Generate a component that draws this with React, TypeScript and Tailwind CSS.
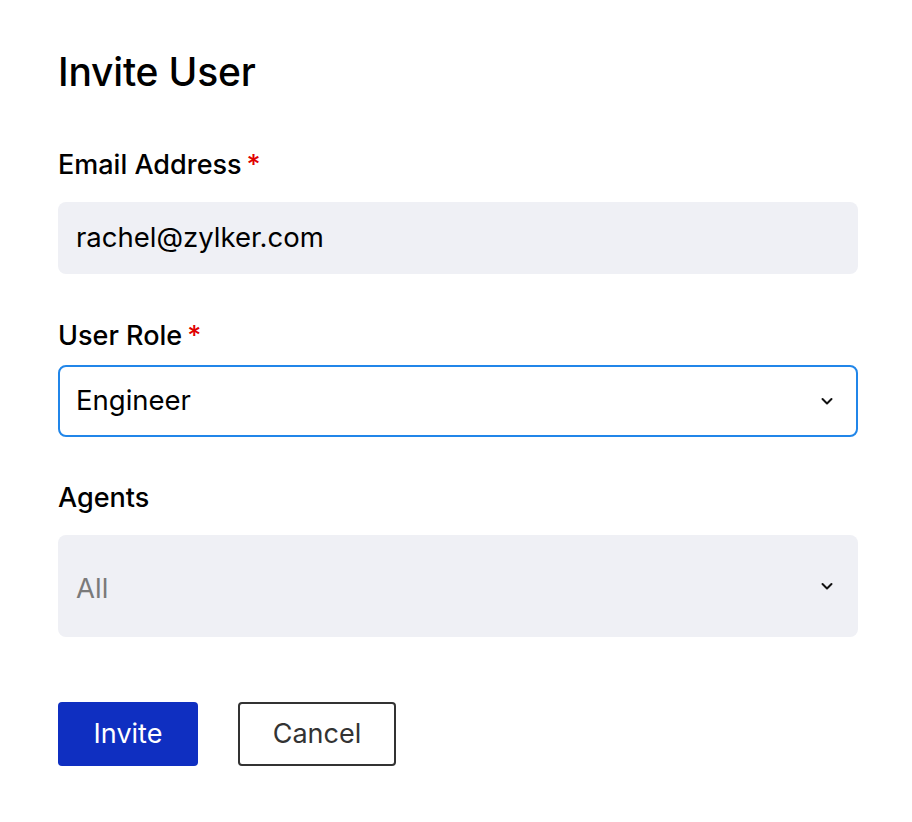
import React from "react";

function Chevron() {
  return (
    <svg width="14" height="14" viewBox="0 0 14 14" fill="none">
      <path d="M2.5 5 L7 9.5 L11.5 5" stroke="#111" strokeWidth="2" strokeLinecap="round" strokeLinejoin="round" />
    </svg>
  );
}

export default function App() {
  return (
    <div className="min-h-[822px] w-[912px] bg-white text-black" style={{ fontFamily: "Inter, 'Noto Sans', sans-serif" }}>
      <div className="w-[800px] ml-[58px] pt-[50px]">
        <h1 className="text-[39px] leading-[44px] font-medium tracking-[-0.2px]">Invite User</h1>

        <div className="mt-[55px] flex items-center text-[27px] leading-[32px] font-medium">
          Email Address<span className="ml-[5px] text-[#e00000]">*</span>
        </div>
        <div className="mt-[21px] h-[72px] rounded-[8px] bg-[#eff0f5] px-[18px] flex items-center text-[27.5px]">
          rachel@zylker.com
        </div>

        <div className="mt-[46px] flex items-center text-[27px] leading-[32px] font-medium">
          User Role<span className="ml-[5px] text-[#e00000]">*</span>
        </div>
        <div className="mt-[13px] h-[72px] rounded-[8px] border-2 border-[#2186e9] bg-white pl-[16px] pr-[22px] flex items-center justify-between text-[27.5px]">
          <span>Engineer</span>
          <Chevron />
        </div>

        <div className="mt-[45px] text-[27px] leading-[32px] font-medium">Agents</div>
        <div className="mt-[21px] h-[102px] rounded-[8px] bg-[#eff0f5] pl-[18px] pr-[24px] flex items-center justify-between text-[27.5px] text-[#7a7a7a]">
          <span className="pt-[5px]">All</span>
          <Chevron />
        </div>

        <div className="mt-[65px] flex gap-[40px]">
          <button className="h-[64px] w-[140px] rounded-[4px] bg-[#0f2fc1] text-white text-[27px]">Invite</button>
          <button className="h-[64px] w-[158px] rounded-[4px] border-2 border-[#333] bg-white text-[#333] text-[27px]">Cancel</button>
        </div>
      </div>
    </div>
  );
}
